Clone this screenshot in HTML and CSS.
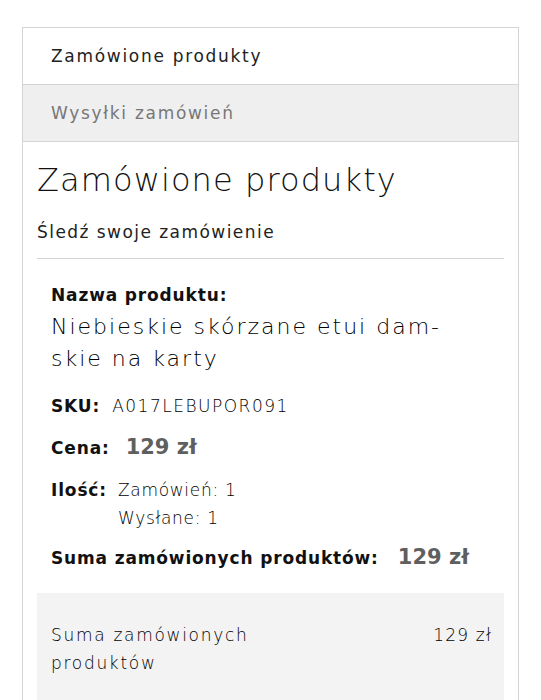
FILE: index.html
```html
<!DOCTYPE html>
<html lang="pl">
<head>
<meta charset="utf-8">
<link rel="stylesheet" href="styles.css">
</head>
<body>
<div class="card">
  <div class="tab tab-active">Zamówione produkty</div>
  <div class="tab tab-muted">Wysyłki zamówień</div>
  <div class="panel">
    <h1 class="title">Zamówione produkty</h1>
    <p class="subtitle">Śledź swoje zamówienie</p>
    <hr class="divider">
    <div class="product">
      <div class="label name-label">Nazwa produktu:</div>
      <div class="name">Niebieskie skórzane etui dam-<br>skie na karty</div>
      <div class="row sku"><span class="label">SKU:</span><span class="value">A017LEBUPOR091</span></div>
      <div class="row price"><span class="label">Cena:</span><span class="amount">129 zł</span></div>
      <div class="row qty"><span class="label">Ilość:</span><span class="value qty-list"><span>Zamówień: 1</span><span>Wysłane: 1</span></span></div>
      <div class="row total"><span class="label">Suma zamówionych produktów:</span><span class="amount">129 zł</span></div>
    </div>
    <div class="summary">
      <div class="summary-label">Suma zamówionych<br>produktów</div>
      <div class="summary-value">129 zł</div>
    </div>
  </div>
</div>
</body>
</html>
```
FILE: styles.css
```css
html, body { margin: 0; padding: 0; background: #fff; }
body {
  font-family: "DejaVu Sans", "Open Sans", sans-serif;
  color: #222;
  padding: 27px 22px 0 22px;
  letter-spacing: 1.6px;
}
.card {
  border: 1px solid #d4d4d4;
  border-bottom: none;
}
.tab {
  height: 56px;
  display: flex;
  align-items: center;
  padding-left: 28px;
  font-size: 17px;
  letter-spacing: 1.7px;
  border-bottom: 1px solid #d4d4d4;
}
.tab-active { color: #222; background: #fff; }
.tab-muted { color: #777; background: #efefef; }
.panel { padding: 0 14px; }
.title {
  margin: 0;
  padding-top: 18px;
  font-size: 32px;
  font-weight: 300;
  line-height: 40px;
  letter-spacing: 1.1px;
  color: #111;
}
.subtitle {
  margin: 0;
  padding-top: 20px;
  font-size: 17px;
  line-height: 24px;
  letter-spacing: 1.45px;
}
.divider {
  border: 0;
  border-top: 1px solid #d4d4d4;
  margin: 14px 0 0 0;
}
.product { padding: 25px 14px 21px 14px; }
.label {
  font-weight: 700;
  font-size: 17px;
  line-height: 22px;
  letter-spacing: 0.85px;
  color: #111;
  white-space: nowrap;
}
.name {
  font-size: 22px;
  line-height: 32px;
  margin-top: 5px;
  font-weight: 300;
  letter-spacing: 2px;
  color: #000;
}
.row { display: flex; align-items: baseline; }
.value { font-size: 17px; font-weight: 300; line-height: 22px; letter-spacing: 1.5px; color: #000; }
.amount {
  font-size: 21px;
  line-height: 30px;
  font-weight: 700;
  letter-spacing: 0;
  color: #5f5f5f;
  white-space: nowrap;
}
.sku { margin-top: 20px; gap: 12px; }
.price { margin-top: 15px; gap: 16px; }
.qty { margin-top: 14px; gap: 11px; }
.qty-list { display: flex; flex-direction: column; line-height: 28px; letter-spacing: 0.7px; }
.total { margin-top: 10px; gap: 19px; }
.summary {
  background: #f3f3f3;
  display: flex;
  justify-content: space-between;
  padding: 28px 12px 30px 14px;
  font-size: 17px;
  line-height: 28px;
  font-weight: 300;
  letter-spacing: 1.7px;
  color: #000;
}
.summary-value { letter-spacing: 1.2px; }
```
